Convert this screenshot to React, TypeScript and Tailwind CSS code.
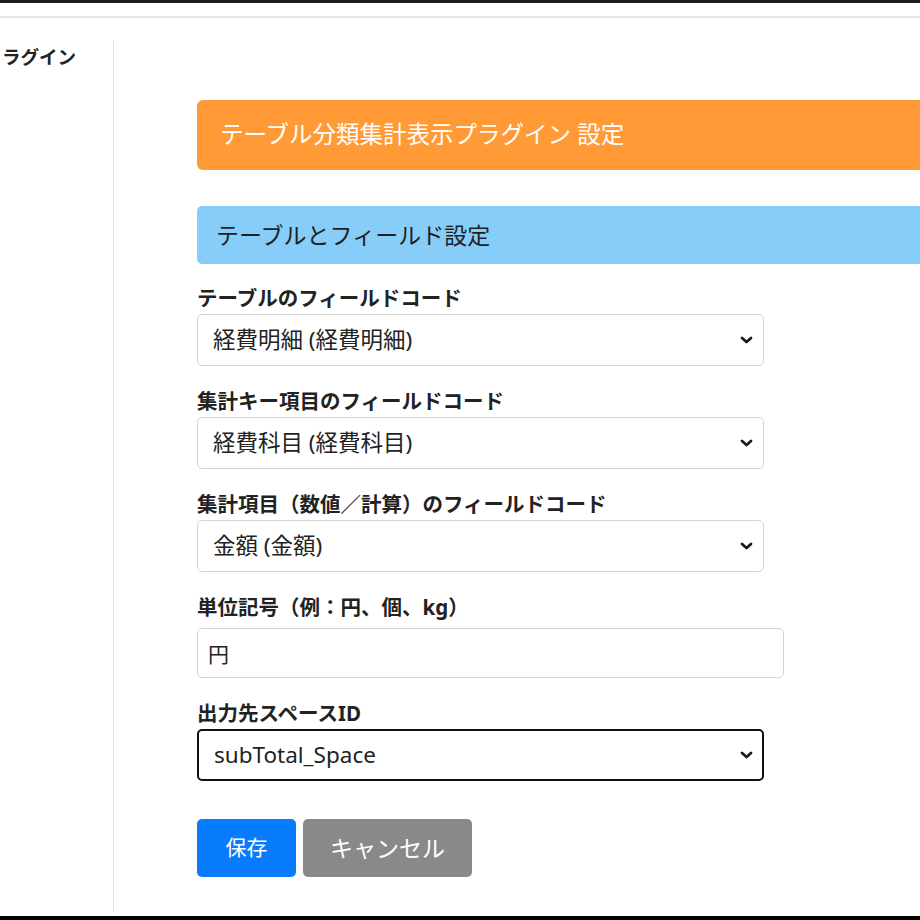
import React from 'react';

const font = { fontFamily: '"Noto Sans", "Noto Sans CJK JP", sans-serif' };

function Chevron() {
  return (
    <svg
      className="pointer-events-none absolute right-[11px] top-1/2 -translate-y-1/2"
      width="13"
      height="9"
      viewBox="0 0 13 9"
      fill="none"
      stroke="#1a1a1a"
      strokeWidth="2.8"
      strokeLinecap="round"
      strokeLinejoin="round"
    >
      <polyline points="2 2.5 6.5 6.5 11 2.5" />
    </svg>
  );
}

function SelectField({
  label,
  value,
  focused,
}: {
  label: string;
  value: string;
  focused?: boolean;
}) {
  return (
    <div className="mt-[22px]">
      <div className="text-[20.5px] leading-[26px] font-bold text-[#222] mb-[3px]">{label}</div>
      <div className="relative w-[567px]">
        <select
          defaultValue={value}
          className={`appearance-none w-full h-[52px] rounded-[5px] bg-white pl-[15px] pr-8 text-[22.5px] text-[#222] outline-none ${
            focused ? 'border-2 border-[#111]' : 'border border-[#d4d4d4]'
          }`}
          style={font}
        >
          <option>{value}</option>
        </select>
        <Chevron />
      </div>
    </div>
  );
}

export default function App() {
  return (
    <div className="w-[920px] h-[920px] overflow-hidden bg-white flex flex-col" style={font}>
      {/* window chrome */}
      <div className="h-[3px] bg-[#1c1c1c] shrink-0" />
      <div className="h-[13px] shrink-0" />
      <div className="h-[2px] bg-[#e6e6e6] shrink-0" />

      <div className="flex flex-1 min-h-0">
        {/* Sidebar */}
        <aside className="w-[114px] shrink-0 border-r border-[#e3e3e3] mt-[22px] mb-[3px] pt-[4px]">
          <div className="text-[18.5px] leading-[26px] font-bold text-[#222] pl-[2px]">ラグイン</div>
        </aside>

        {/* Content */}
        <main className="flex-1 min-w-0 pl-[83px] pt-[82px]">
          <div className="w-[760px] h-[70px] rounded-l-[6px] bg-[#ff9a36] flex items-center px-[23px] text-white text-[23.5px]">
            テーブル分類集計表示プラグイン 設定
          </div>

          <div className="mt-[36px] w-[760px] h-[58px] rounded-l-[5px] bg-[#87cdf9] flex items-center px-[19px] text-[#1f1f1f] text-[23px]">
            テーブルとフィールド設定
          </div>

          <div className="-mt-[1px]">
            <SelectField label="テーブルのフィールドコード" value="経費明細 (経費明細)" />
          </div>
          <SelectField label="集計キー項目のフィールドコード" value="経費科目 (経費科目)" />
          <SelectField label="集計項目（数値／計算）のフィールドコード" value="金額 (金額)" />

          <div className="mt-[22px]">
            <div className="text-[20.5px] leading-[26px] font-bold text-[#222] mb-[8px]">
              単位記号（例：円、個、kg）
            </div>
            <input
              defaultValue="円"
              className="w-[587px] h-[50px] rounded-[5px] border border-[#d4d4d4] px-[10px] text-[21px] text-[#222] outline-none"
              style={font}
            />
          </div>

          <SelectField label="出力先スペースID" value="subTotal_Space" focused />

          <div className="mt-[38px] flex gap-[7px]">
            <button className="w-[99px] h-[58px] rounded-[5px] bg-[#087cfd] text-white text-[21px]" style={font}>
              保存
            </button>
            <button className="w-[169px] h-[58px] rounded-[5px] bg-[#898989] text-white text-[23px]" style={font}>
              キャンセル
            </button>
          </div>
        </main>
      </div>

      <div className="h-[4px] bg-black shrink-0" />
    </div>
  );
}
